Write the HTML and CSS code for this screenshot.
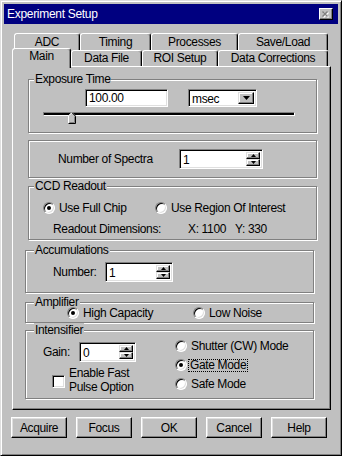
FILE: index.html
```html
<!DOCTYPE html>
<html lang="en">
<head>
  <meta charset="UTF-8" />
  <meta name="viewport" content="width=device-width, initial-scale=1.0" />
  <title>Experiment Setup</title>
  <link rel="stylesheet" href="styles.css">
</head>
<body>
  <div class="window">
    <div class="titlebar">
      <span class="title">Experiment Setup</span>
      <span class="close-btn">
        <svg width="8" height="7" viewBox="0 0 8 7">
          <path d="M1.5 1.5l5 5M6.5 1.5l-5 5" stroke="#fff" stroke-width="1.4"/>
          <path d="M0.5 0.5l5 5M5.5 0.5l-5 5" stroke="#808080" stroke-width="1.4"/>
        </svg>
      </span>
    </div>

    <!-- tab strip, two rows -->
    <div class="tab-row back">
      <div class="tab t-adc">ADC</div>
      <div class="tab t-timing">Timing</div>
      <div class="tab t-proc">Processes</div>
      <div class="tab t-save">Save/Load</div>
    </div>
    <div class="tab-row front">
      <div class="tab active t-main">Main</div>
      <div class="tab t-file">Data File</div>
      <div class="tab t-roi">ROI Setup</div>
      <div class="tab t-corr">Data Corrections</div>
    </div>

    <div class="panel">
      <div class="group g-exposure">
        <div class="legend">Exposure Time</div>
        <div class="exp-row">
          <div class="field exp-input">100.00</div>
          <div class="field combo">
            <span class="combo-text">msec</span>
            <span class="combo-btn">
              <svg width="7" height="4" viewBox="0 0 7 4"><path d="M0 0h7L3.5 4z" fill="#000"/></svg>
            </span>
          </div>
        </div>
        <div class="slider">
          <div class="track"></div>
          <svg class="thumb" width="8" height="12" viewBox="0 0 8 12">
            <path d="M0 12V4L4 0l4 4v8z" fill="#c0c0c0"/>
            <path d="M0.5 11.5V3.8L4 0.7" stroke="#fff" fill="none"/>
            <path d="M4 0.7l3.5 3.5v7.3H0.5" stroke="#000" fill="none"/>
            <path d="M6.5 4.5v6H1.5" stroke="#808080" fill="none"/>
          </svg>
        </div>
      </div>

      <div class="group g-spectra">
        <div class="spec-row">
          <span class="spec-label">Number of Spectra</span>
          <div class="field spin spec-spin">
            <span class="spin-text">1</span>
            <span class="spin-btns">
              <span class="spin-btn"><svg width="5" height="3" viewBox="0 0 5 3"><path d="M2.5 0L5 3H0z" fill="#000"/></svg></span>
              <span class="spin-btn"><svg width="5" height="3" viewBox="0 0 5 3"><path d="M0 0h5L2.5 3z" fill="#000"/></svg></span>
            </span>
          </div>
        </div>
      </div>

      <div class="group g-ccd">
        <div class="legend">CCD Readout</div>
        <div class="radio-row ccd-radios">
          <div class="option ccd-full"><span class="radio on"></span><span class="opt-label">Use Full Chip</span></div>
          <div class="option"><span class="radio"></span><span class="opt-label">Use Region Of Interest</span></div>
        </div>
        <div class="dims-row">
          <span class="dims-label">Readout Dimensions:</span>
          <span class="dims-x">X: 1100</span>
          <span>Y: 330</span>
        </div>
      </div>

      <div class="group g-accum">
        <div class="legend">Accumulations</div>
        <div class="accum-row">
          <span class="accum-label">Number:</span>
          <div class="field spin accum-spin">
            <span class="spin-text">1</span>
            <span class="spin-btns">
              <span class="spin-btn"><svg width="5" height="3" viewBox="0 0 5 3"><path d="M2.5 0L5 3H0z" fill="#000"/></svg></span>
              <span class="spin-btn"><svg width="5" height="3" viewBox="0 0 5 3"><path d="M0 0h5L2.5 3z" fill="#000"/></svg></span>
            </span>
          </div>
        </div>
      </div>

      <div class="group g-amp">
        <div class="legend">Amplifier</div>
        <div class="radio-row amp-radios">
          <div class="option amp-high"><span class="radio on"></span><span class="opt-label">High Capacity</span></div>
          <div class="option"><span class="radio"></span><span class="opt-label">Low Noise</span></div>
        </div>
      </div>

      <div class="group g-int">
        <div class="legend">Intensifier</div>
        <div class="int-cols">
          <div class="int-left">
            <div class="gain-row">
              <span class="gain-label">Gain:</span>
              <div class="field spin gain-spin">
                <span class="spin-text">0</span>
                <span class="spin-btns">
                  <span class="spin-btn"><svg width="5" height="3" viewBox="0 0 5 3"><path d="M2.5 0L5 3H0z" fill="#000"/></svg></span>
                  <span class="spin-btn"><svg width="5" height="3" viewBox="0 0 5 3"><path d="M0 0h5L2.5 3z" fill="#000"/></svg></span>
                </span>
              </div>
            </div>
            <div class="check-row">
              <span class="checkbox"></span>
              <span class="check-label">Enable Fast<br>Pulse Option</span>
            </div>
          </div>
          <div class="int-right">
            <div class="option"><span class="radio"></span><span class="opt-label">Shutter (CW) Mode</span></div>
            <div class="option"><span class="radio on"></span><span class="opt-label focus">Gate Mode</span></div>
            <div class="option"><span class="radio"></span><span class="opt-label">Safe Mode</span></div>
          </div>
        </div>
      </div>
    </div>

    <div class="buttons">
      <button class="btn">Acquire</button>
      <button class="btn">Focus</button>
      <button class="btn">OK</button>
      <button class="btn">Cancel</button>
      <button class="btn">Help</button>
    </div>
  </div>
</body>
</html>
```

FILE: styles.css
```css
* {
  box-sizing: border-box;
}

body {
  margin: 0;
  background: #c0c0c0;
  font-family: "Liberation Sans", Arial, sans-serif;
  font-size: 12px;
  letter-spacing: -0.35px;
  color: #000;
}

/* Fenster */
.window {
  width: 342px;
  height: 456px;
  background: #c0c0c0;
  border: 1px solid;
  border-color: #dfdfdf #000 #000 #dfdfdf;
  box-shadow: inset 1px 1px #fff, inset -1px -1px #808080;
  padding: 3px;
}

.titlebar {
  height: 20px;
  background: #000080;
  color: #fff;
  display: flex;
  align-items: center;
  justify-content: space-between;
  padding: 0 5px 0 3px;
}

.title {
  line-height: 20px;
  letter-spacing: -0.3px;
}

.close-btn {
  width: 14px;
  height: 12px;
  background: #c0c0c0;
  border: 1px solid;
  border-color: #fff #000 #000 #fff;
  box-shadow: inset -1px -1px #808080;
  display: flex;
  align-items: center;
  justify-content: center;
}

/* Tabs */
.tab-row {
  display: flex;
}

.tab-row.back {
  margin: 9px 0 0 10px;
  height: 17px;
}

.tab-row.front {
  margin-left: 8px;
  height: 16px;
  position: relative;
  z-index: 1;
}

.tab {
  height: 100%;
  border: 1px solid;
  border-bottom: none;
  border-color: #fff #000 transparent #fff;
  border-radius: 3px 3px 0 0;
  box-shadow: inset -1px 0 #808080;
  background: #c0c0c0;
  text-align: center;
  line-height: 15px;
}

.tab-row.back .tab {
  line-height: 16px;
}

.tab.active {
  height: 20px;
  margin-top: -2px;
  line-height: 15px;
}

.t-adc { width: 66px; }
.t-timing { width: 71px; }
.t-proc { width: 87px; }
.t-save { width: 90px; }
.t-main { width: 59px; }
.t-file { width: 71px; }
.t-roi { width: 76px; }
.t-corr { width: 110px; }

.panel {
  margin-left: 8px;
  width: 319px;
  height: 344px;
  border: 1px solid;
  border-color: #fff #000 #000 #fff;
  box-shadow: inset -1px -1px #808080;
  overflow: hidden;
}

/* Gruppen */
.group {
  width: 289px;
  border: 1px solid #808080;
  box-shadow: inset 1px 1px #fff, 1px 1px #fff;
}

.legend {
  width: fit-content;
  height: 14px;
  line-height: 14px;
  margin: -8px 0 0 5px;
  padding: 0 1px;
  background: #c0c0c0;
}

.g-exposure { margin: 12px 0 0 15px; height: 54px; }
.g-spectra { margin: 7px 0 0 15px; height: 38px; }
.g-ccd { margin: 8px 0 0 15px; height: 54px; }
.g-accum { margin: 10px 0 0 12px; height: 43px; }
.g-amp { margin: 9px 0 0 12px; height: 21px; }
.g-int { margin: 7px 0 0 12px; height: 69px; }

.g-accum .legend,
.g-amp .legend,
.g-int .legend {
  margin-left: 8px;
}

/* Eingabefelder */
.field {
  background: #fff;
  border: 1px solid;
  border-color: #808080 #fff #fff #808080;
  box-shadow: inset 1px 1px #000, inset -1px -1px #dfdfdf;
}

.exp-row {
  display: flex;
  margin: 3px 0 0 56px;
}

.exp-input {
  width: 83px;
  height: 18px;
  padding-left: 3px;
  line-height: 16px;
}

.combo {
  width: 69px;
  height: 18px;
  margin-left: 20px;
  display: flex;
  padding: 2px;
}

.combo-text {
  flex: 1;
  padding-left: 1px;
  line-height: 14px;
}

.combo-btn,
.spin-btn {
  background: #c0c0c0;
  border: 1px solid;
  border-color: #dfdfdf #000 #000 #dfdfdf;
  box-shadow: inset -1px -1px #808080, inset 1px 1px #fff;
  display: flex;
  align-items: center;
  justify-content: center;
}

.combo-btn {
  width: 16px;
}

.slider {
  position: relative;
  width: 252px;
  height: 12px;
  margin: 5px 0 0 14px;
}

.track {
  margin-top: 5px;
  height: 4px;
  background: #000;
  border: 1px solid;
  border-color: #808080 #fff #fff #808080;
}

.thumb {
  position: absolute;
  left: 25px;
  top: 0;
}

.spin {
  display: flex;
  height: 20px;
  padding: 2px;
}

.spin-text {
  flex: 1;
  line-height: 16px;
  padding-left: 1px;
}

.spin-btns {
  width: 14px;
  display: flex;
  flex-direction: column;
}

.spin-btn {
  flex: 1;
}

.spec-row {
  display: flex;
  align-items: center;
  margin: 8px 0 0 29px;
}

.spec-label { width: 121px; }
.spec-spin { width: 84px; }

/* Radio / Checkbox */
.radio-row,
.dims-row {
  display: flex;
  align-items: center;
  height: 14px;
}

.option {
  display: flex;
  align-items: center;
  height: 14px;
}

.radio {
  width: 12px;
  height: 12px;
  border-radius: 50%;
  background: #fff;
  border: 1px solid;
  border-color: #808080 #fff #fff #808080;
  box-shadow: inset 1px 1px #000, inset -1px -1px #dfdfdf;
  display: flex;
  align-items: center;
  justify-content: center;
  flex-shrink: 0;
}

.radio.on::after {
  content: "";
  width: 4px;
  height: 4px;
  border-radius: 50%;
  background: #000;
}

.opt-label {
  margin-left: 4px;
  white-space: nowrap;
}

.opt-label.focus {
  margin-left: 1px;
  padding: 0 1px;
  border: 1px dotted #000;
  line-height: 11px;
}

.ccd-radios { margin: 8px 0 0 14px; }
.ccd-full { width: 112px; }

.dims-row { margin: 7px 0 0 24px; }
.dims-label { width: 135px; }
.dims-x { width: 47px; }

.accum-row {
  display: flex;
  align-items: center;
  margin: 5px 0 0 27px;
}

.accum-label { width: 52px; }
.accum-spin { width: 68px; }

.amp-radios { margin: -3px 0 0 41px; }
.amp-high { width: 126px; }

.int-cols {
  display: flex;
}

.int-left {
  width: 149px;
}

.gain-row {
  display: flex;
  align-items: center;
  margin: 5px 0 0 17px;
}

.gain-label { width: 36px; }
.gain-spin { width: 57px; }

.check-row {
  display: flex;
  align-items: center;
  margin: 4px 0 0 26px;
}

.checkbox {
  width: 13px;
  height: 13px;
  margin-top: 2px;
  background: #fff;
  border: 1px solid;
  border-color: #808080 #fff #fff #808080;
  box-shadow: inset 1px 1px #000, inset -1px -1px #dfdfdf;
}

.check-label {
  margin-left: 4px;
  line-height: 14px;
}

.int-right {
  display: flex;
  flex-direction: column;
  gap: 5px;
  padding-top: 2px;
}

/* Knöpfe unten */
.buttons {
  display: flex;
  gap: 9px;
  margin: 7px 0 0 7px;
}

.btn {
  width: 56px;
  height: 21px;
  padding: 0;
  font: inherit;
  letter-spacing: inherit;
  color: #000;
  background: #c0c0c0;
  border: 1px solid;
  border-color: #fff #000 #000 #fff;
  box-shadow: inset -1px -1px #808080, inset 1px 1px #dfdfdf;
}
```
